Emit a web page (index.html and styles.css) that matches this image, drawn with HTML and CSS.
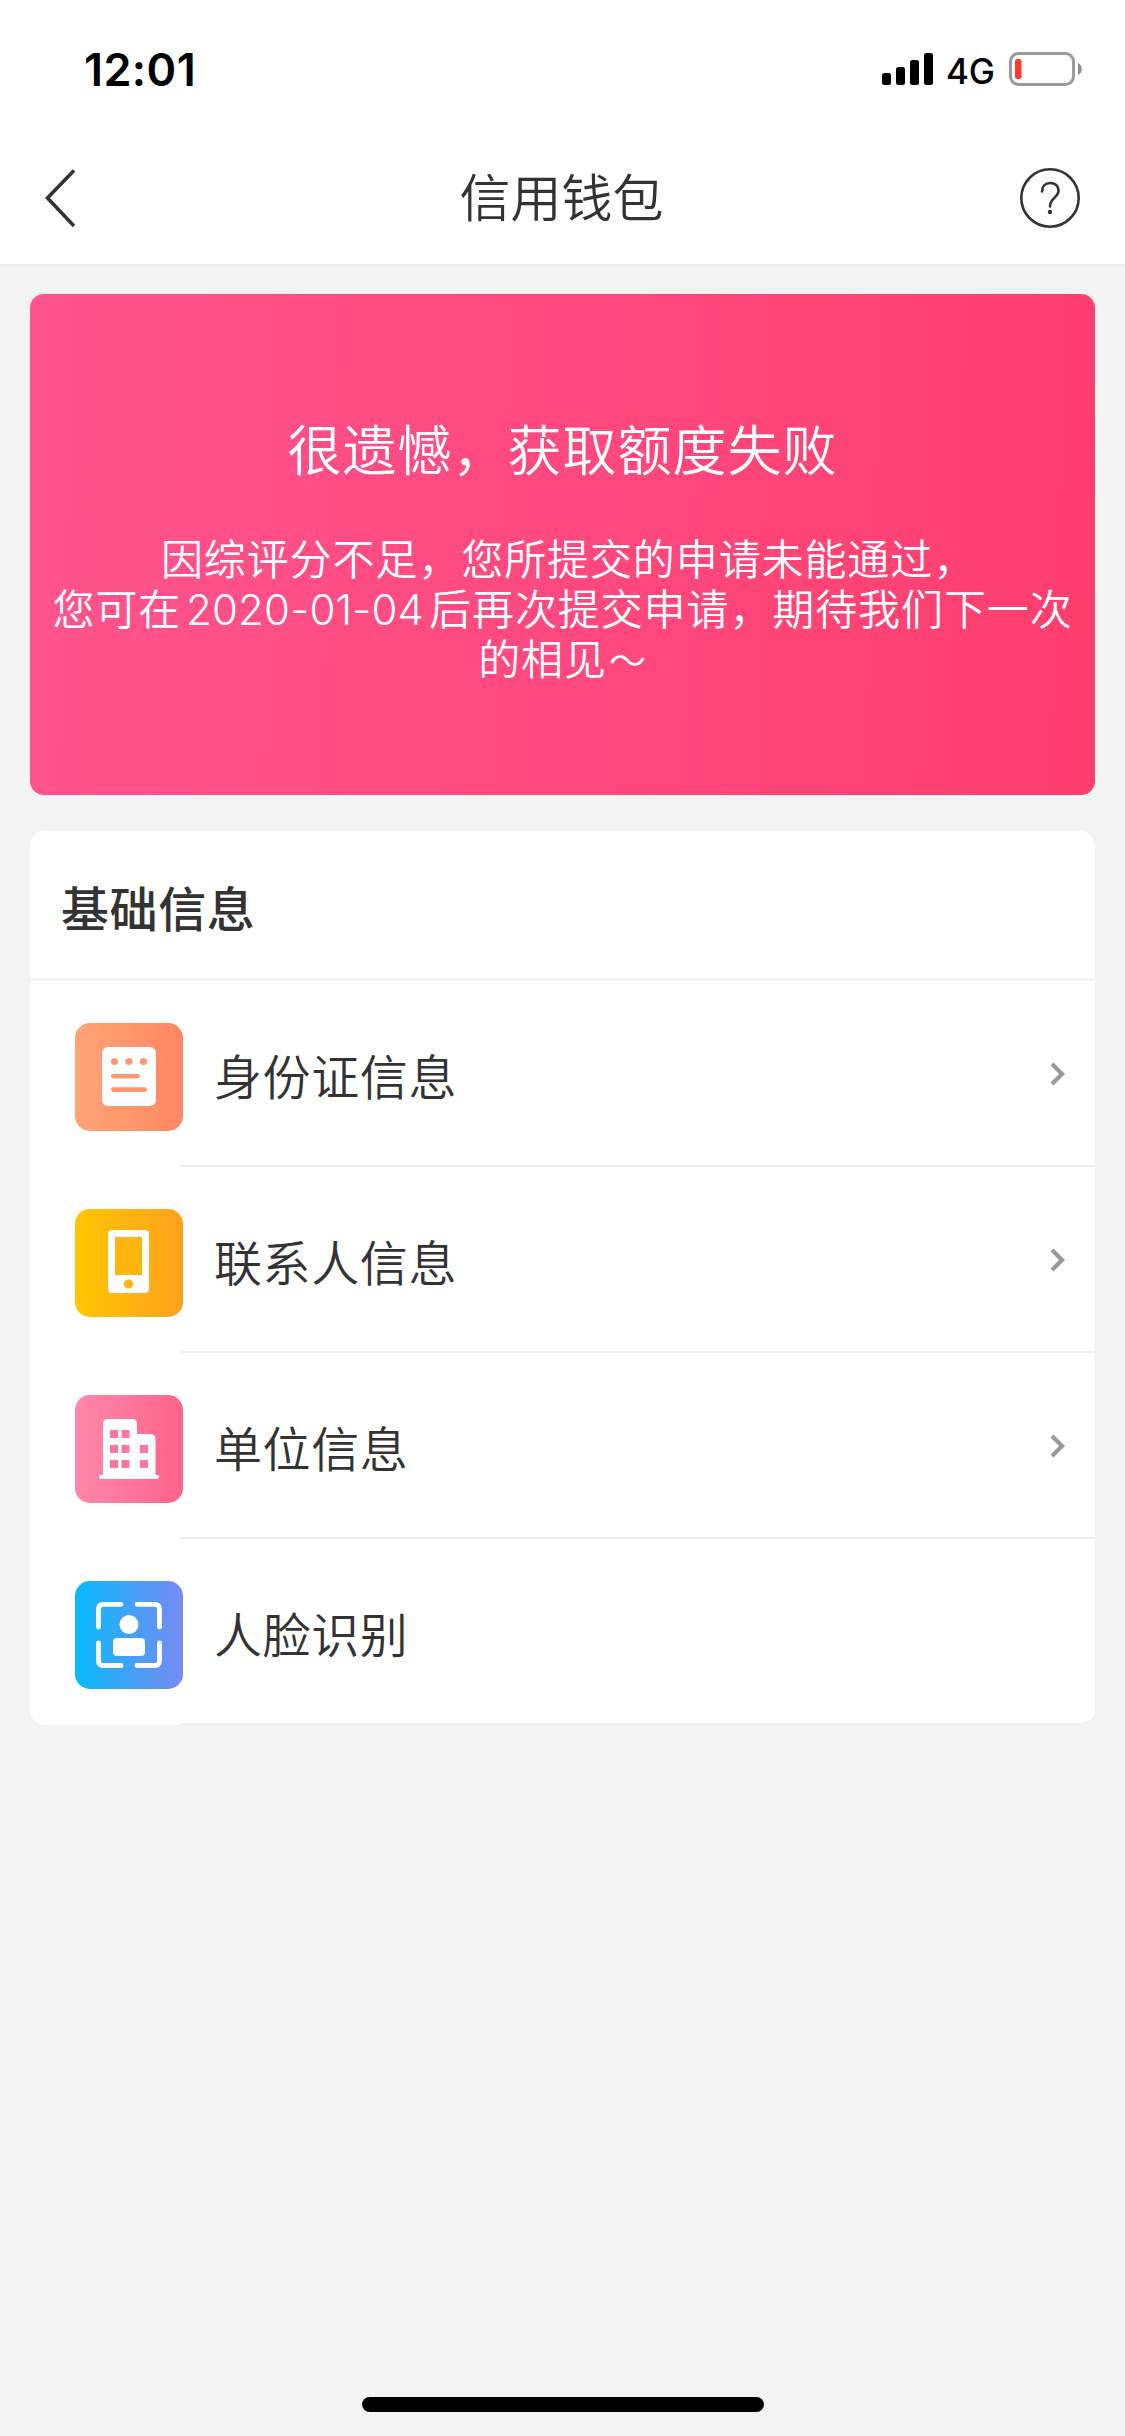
FILE: index.html
```html
<!DOCTYPE html>
<html lang="zh-CN">
<head>
<meta charset="utf-8">
<title>信用钱包</title>
<link rel="stylesheet" href="styles.css">
</head>
<body>
<div class="screen">
  <header class="top">
    <div class="status">
      <span class="time">12:01</span>
      <div class="indicators">
        <svg class="signal" viewBox="0 0 51 32"><rect x="0" y="20" width="9" height="12" rx="2.5"/><rect x="14" y="14" width="9" height="18" rx="2.5"/><rect x="28" y="7" width="9" height="25" rx="2.5"/><rect x="42" y="0" width="9" height="32" rx="2.5"/></svg>
        <span class="network">4G</span>
        <svg class="battery" viewBox="0 0 73 34"><rect x="1.5" y="1.5" width="63" height="31" rx="8" fill="none" stroke="#9b9b9b" stroke-width="3"/><rect x="6" y="7" width="6.5" height="20" rx="2.5" fill="#ff3b30"/><path d="M69 11c5 2 5 10 0 12z" fill="#8e8e8e"/></svg>
      </div>
    </div>
    <nav class="nav">
      <svg class="back" viewBox="0 0 30 58"><path d="M29 1.500L2.500 29L29 57"/></svg>
      <h1 class="title">信用钱包</h1>
      <svg class="help" viewBox="0 0 60 60"><circle cx="30" cy="30" r="28.700"/><path d="M22 23.500C22 18 25.500 15 30.300 15C35 15 38.500 18 38.500 22.500C38.500 29.500 30 30 30 38.500"/><circle class="dot" cx="30" cy="44" r="2.200"/></svg>
    </nav>
  </header>
  <main class="content">
    <section class="banner">
      <h2 class="banner-title">很遗憾，获取额度失败</h2>
      <div class="banner-text">
        <p class="lead">因综评分不足，您所提交的申请未能通过，</p>
        <p>您可在<span class="date">2020-01-04</span>后再次提交申请，期待我们下一次</p>
        <p>的相见<span class="tilde">～</span></p>
      </div>
    </section>
    <section class="card">
      <h3 class="card-title">基础信息</h3>
      <ul class="list">
        <li class="row">
          <svg class="icon" viewBox="0 0 108 108"><defs><linearGradient id="orange"><stop stop-color="#ffa577"/><stop offset="1" stop-color="#ff8761"/></linearGradient></defs><rect width="108" height="108" rx="15" fill="url(#orange)"/><rect x="27" y="24" width="54" height="59" rx="6" fill="#fff"/><g fill="#ff986e"><circle cx="39.500" cy="38.500" r="3.600"/><circle cx="54" cy="38.500" r="3.600"/><circle cx="68.500" cy="38.500" r="3.600"/><rect x="36" y="51" width="29" height="4.600" rx="2.300"/><rect x="36" y="64.300" width="36" height="4.600" rx="2.300"/></g></svg>
          <div class="row-body"><span class="label">身份证信息</span><svg class="arrow" viewBox="0 0 16 24"><path d="M2 2L12 12L2 22"/></svg></div>
        </li>
        <li class="row">
          <svg class="icon" viewBox="0 0 108 108"><defs><linearGradient id="yellow"><stop stop-color="#ffc600"/><stop offset="1" stop-color="#ffa11d"/></linearGradient></defs><rect width="108" height="108" rx="15" fill="url(#yellow)"/><rect x="33" y="21" width="41" height="63" rx="4" fill="#fff"/><rect x="40" y="28" width="27" height="38" fill="#ffb40e"/><circle cx="53.500" cy="75" r="4.600" fill="#ffb40e"/></svg>
          <div class="row-body"><span class="label">联系人信息</span><svg class="arrow" viewBox="0 0 16 24"><path d="M2 2L12 12L2 22"/></svg></div>
        </li>
        <li class="row">
          <svg class="icon" viewBox="0 0 108 108"><defs><linearGradient id="pink"><stop stop-color="#ff87ab"/><stop offset="1" stop-color="#ff638b"/></linearGradient></defs><rect width="108" height="108" rx="15" fill="url(#pink)"/><path d="M28 80V29q0-5 5-5H57q5 0 5 5V39H75q5.500 0 5.500 5.500V80H82q2 0 2 2t-2 2H26q-2 0-2-2t2-2z" fill="#fff"/><path d="M35 35h8v8h-8zM46.500 35h8v8h-8zM35 50h8v8h-8zM46.500 50h8v8h-8zM65 50h8v8h-8zM35 65h8v8h-8zM46.500 65h8v8h-8zM65 65h8v8h-8z" fill="#ff779d"/></svg>
          <div class="row-body"><span class="label">单位信息</span><svg class="arrow" viewBox="0 0 16 24"><path d="M2 2L12 12L2 22"/></svg></div>
        </li>
        <li class="row">
          <svg class="icon" viewBox="0 0 108 108"><defs><linearGradient id="blue"><stop stop-color="#08bbff"/><stop offset="1" stop-color="#778af2"/></linearGradient></defs><rect width="108" height="108" rx="15" fill="url(#blue)"/><path d="M46 23.300H28.500q-5 0-5 5V46M62 23.300H79.500q5 0 5 5V46M46 84.500H28.500q-5 0-5-5V62M62 84.500H79.500q5 0 5-5V62" fill="none" stroke="#fff" stroke-width="4.800" stroke-linecap="round"/><circle cx="54" cy="43.500" r="9.500" fill="#fff"/><rect x="38" y="57" width="32" height="18" rx="4" fill="#fff"/></svg>
          <div class="row-body"><span class="label">人脸识别</span></div>
        </li>
      </ul>
    </section>
  </main>
  <footer class="bottom"><div class="home-bar"></div></footer>
</div>
</body>
</html>
```
FILE: styles.css
```css
* { box-sizing: border-box; margin: 0; padding: 0; }

body {
  width: 1125px;
  background: #f3f3f3;
  color: #333;
  font-family: "Noto Sans CJK SC", sans-serif;
}

.screen {
  display: flex;
  flex-direction: column;
  height: 2436px;
}

.top {
  height: 266px;
  background: #fff;
  border-bottom: 2px solid #eee;
}

.status {
  display: flex;
  justify-content: space-between;
  align-items: center;
  height: 132px;
  padding: 6px 43px 0 84px;
  color: #000;
  font-family: Inter, sans-serif;
}

.time { padding-top: 1px; font-size: 45px; font-weight: 600; line-height: 54px; letter-spacing: 0.4px; }
.indicators { display: flex; align-items: center; }
.signal { width: 51px; height: 32px; margin-right: -1px; }
.network { width: 48px; margin: 4px 15px 0 14px; font-size: 35px; font-weight: 500; line-height: 42px; letter-spacing: -0.3px; white-space: nowrap; }
.battery { width: 73px; height: 34px; }

.nav {
  display: flex;
  justify-content: space-between;
  align-items: center;
  height: 132px;
  padding: 0 45px;
}

.back { width: 30px; height: 58px; fill: none; stroke: #333; stroke-width: 3.6; }
.title { padding: 0 0 6px 28px; font-size: 51px; font-weight: 350; line-height: 76px; }
.help { width: 60px; height: 60px; fill: none; stroke: #333; stroke-width: 2.6; stroke-linecap: round; }
.help .dot { fill: #333; stroke: none; }

.content { flex: 1; padding: 28px 30px 0; }

.banner {
  height: 501px;
  padding-top: 114px;
  border-radius: 14px;
  background: linear-gradient(92deg, #ff548e, #ff3e6e);
  color: #fff;
  text-align: center;
  white-space: nowrap;
}

.banner-title { font-size: 54px; font-weight: 350; line-height: 80px; letter-spacing: 1px; }
.banner-text { margin-top: 44px; font-size: 42px; font-weight: 350; line-height: 50px; letter-spacing: 0.9px; }
.banner-text p { height: 50px; }
.lead { padding-left: 12px; }
.date { display: inline-block; width: 248px; font-family: Inter, sans-serif; font-weight: 350; line-height: 40px; letter-spacing: 0.2px; }
.tilde { margin-left: 2px; font-size: 37px; }

.card {
  margin-top: 36px;
  border-radius: 15px;
  background: #fff;
}

.card-title {
  height: 150px;
  padding: 40px 31px 0;
  border-bottom: 3px solid #f3f3f3;
  font-size: 48px;
  font-weight: 500;
  line-height: 70px;
  letter-spacing: 0.6px;
}

.list { list-style: none; }
.row { display: flex; height: 186px; padding-left: 45px; }
.icon { flex: none; width: 108px; height: 108px; margin: 42px -3px 0 0; }

.row-body {
  display: flex;
  flex: 1;
  justify-content: space-between;
  align-items: center;
  padding: 0 29px 0 34px;
  border-bottom: 2px solid #eee;
}

.row:last-child .row-body { border-color: #f1f1f1; border-radius: 0 0 15px 0; }

.label { padding-top: 1px; font-size: 48px; font-weight: 350; line-height: 70px; letter-spacing: 0.6px; }
.arrow { width: 16px; height: 24px; margin-top: 2px; fill: none; stroke: #999; stroke-width: 4.2; }

.bottom { display: flex; justify-content: center; height: 39px; }
.home-bar { width: 402px; height: 15px; border-radius: 8px; background: #000; }
```
